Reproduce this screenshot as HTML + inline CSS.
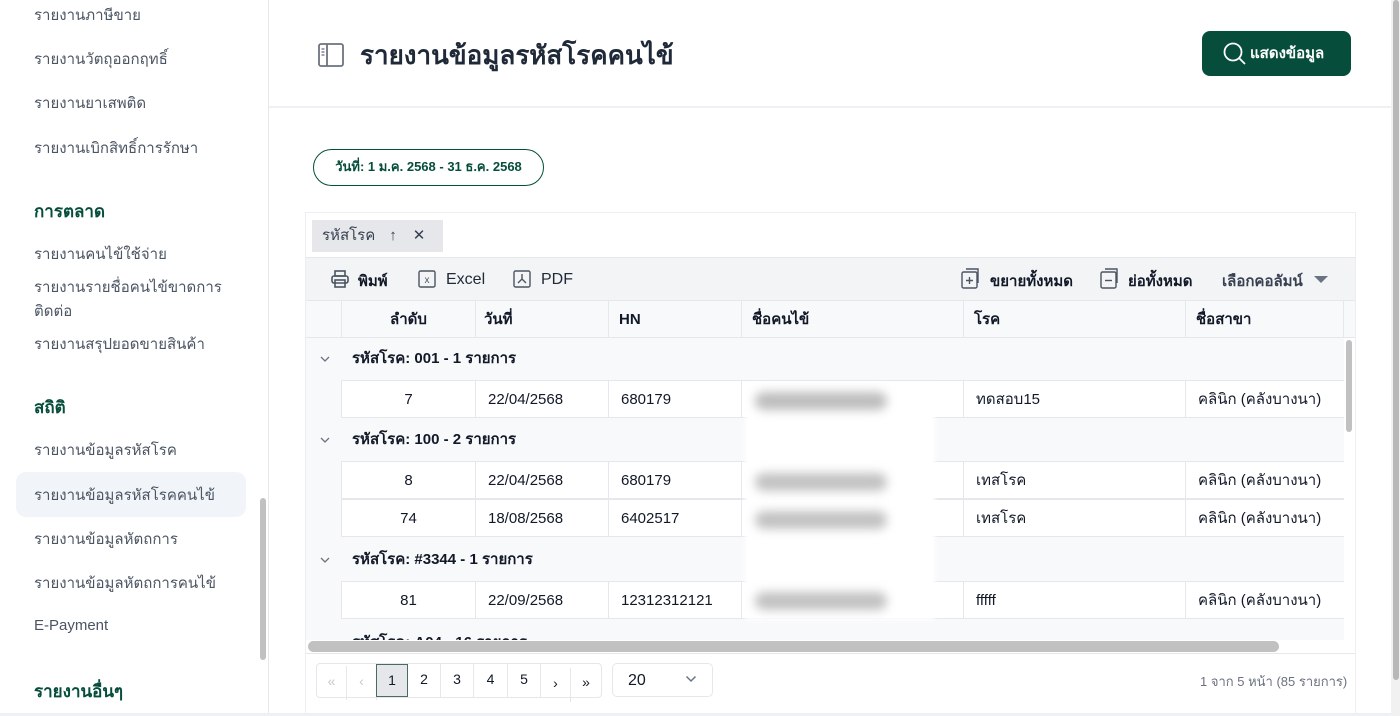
<!DOCTYPE html>
<html><head><meta charset="utf-8">
<style>
*{box-sizing:border-box;margin:0;padding:0}
body{width:1400px;height:716px;overflow:hidden;background:#fff;font-family:"Liberation Sans","Noto Sans CJK SC",sans-serif;color:#111827;position:relative}
.a{position:absolute}
.side{left:0;top:0;width:269px;height:716px;border-right:1px solid #e5e7eb;background:#fff}
.si{position:absolute;left:34px;font-size:15px;color:#4b5563;white-space:nowrap}
.sh{position:absolute;left:34px;font-size:17px;font-weight:bold;color:#064e3b}
.row{position:absolute;left:341px;width:1003px;height:38px;background:#fff;border-top:1px solid #e5e7eb;border-bottom:1px solid #e5e7eb}
.row div{position:absolute;top:0;height:37px;line-height:37px;font-size:15px;border-left:1px solid #e5e7eb;padding-left:12px}
.grp{position:absolute;left:306px;width:1038px;height:42px;background:#f8f9fb;font-weight:bold;font-size:15px;line-height:42px}
.grp svg{position:absolute;left:13px;top:17px}
.grp span.t{position:absolute;left:46px}
.pg{position:absolute;top:664px;height:34px;border-right:1px solid #e5e7eb;text-align:center;line-height:30px;font-size:14px}
</style></head><body>
<div class="a side">
<div class="si" style="top:3px">รายงานภาษีขาย</div>
<div class="si" style="top:47px">รายงานวัตถุออกฤทธิ์</div>
<div class="si" style="top:91px">รายงานยาเสพติด</div>
<div class="si" style="top:136px">รายงานเบิกสิทธิ์การรักษา</div>
<div class="sh" style="top:198px">การตลาด</div>
<div class="si" style="top:242px">รายงานคนไข้ใช้จ่าย</div>
<div class="si" style="top:275px">รายงานรายชื่อคนไข้ขาดการ</div>
<div class="si" style="top:299px">ติดต่อ</div>
<div class="si" style="top:332px">รายงานสรุปยอดขายสินค้า</div>
<div class="sh" style="top:394px">สถิติ</div>
<div class="si" style="top:438px">รายงานข้อมูลรหัสโรค</div>
<div class="a" style="left:16px;top:472px;width:230px;height:45px;background:#f1f4f8;border-radius:10px"></div>
<div class="si" style="top:483px">รายงานข้อมูลรหัสโรคคนไข้</div>
<div class="si" style="top:527px">รายงานข้อมูลหัตถการ</div>
<div class="si" style="top:571px">รายงานข้อมูลหัตถการคนไข้</div>
<div class="si" style="top:617px">E-Payment</div>
<div class="sh" style="top:678px">รายงานอื่นๆ</div>
<div class="a" style="left:260px;top:498px;width:6px;height:162px;background:#c1c1c1;border-radius:3px"></div>
</div>

<svg class="a" style="left:317px;top:42px" width="28" height="26" viewBox="0 0 28 26"><rect x="2" y="2" width="24" height="22" rx="2" fill="none" stroke="#6b7280" stroke-width="1.8"/><line x1="10" y1="2" x2="10" y2="24" stroke="#6b7280" stroke-width="1.8"/><line x1="4.5" y1="7" x2="7.5" y2="7" stroke="#6b7280" stroke-width="1.3"/><line x1="4.5" y1="10" x2="7.5" y2="10" stroke="#6b7280" stroke-width="1.3"/><line x1="4.5" y1="13" x2="7.5" y2="13" stroke="#6b7280" stroke-width="1.3"/></svg>
<div class="a" style="left:360px;top:35px;font-size:26px;font-weight:bold;color:#1f2937">รายงานข้อมูลรหัสโรคคนไข้</div>
<div class="a" style="left:1202px;top:31px;width:149px;height:45px;background:#064e3b;border-radius:8px;color:#fff;font-size:15px;font-weight:bold;line-height:45px;padding-left:48px">แสดงข้อมูล</div>
<svg class="a" style="left:1222px;top:41px" width="26" height="26" viewBox="0 0 26 26"><circle cx="11" cy="11" r="8.5" fill="none" stroke="#fff" stroke-width="1.8"/><line x1="17" y1="17" x2="23" y2="23" stroke="#fff" stroke-width="1.8"/></svg>
<div class="a" style="left:269px;top:106px;width:1123px;height:2px;background:#eef0f3"></div>
<div class="a" style="left:313px;top:149px;width:231px;height:37px;border:1.5px solid #064e3b;border-radius:19px;font-size:13px;font-weight:bold;color:#064e3b;text-align:center;line-height:34px">วันที่: 1 ม.ค. 2568 - 31 ธ.ค. 2568</div>

<div class="a" style="left:305px;top:212px;width:1051px;height:502px;border:1px solid #eceef1;background:#fff"></div>
<div class="a" style="left:312px;top:220px;width:131px;height:32px;background:#e5e7eb;font-size:15px;color:#374151;line-height:32px;padding-left:10px">รหัสโรค<span style="margin-left:14px">↑</span><span style="margin-left:16px">✕</span></div>
<div class="a" style="left:306px;top:257px;width:1049px;height:44px;background:#f3f4f6;border-top:1px solid #e5e7eb"></div>
<svg class="a" style="left:330px;top:269px" width="20" height="20" viewBox="0 0 20 20" fill="none" stroke="#4b5563" stroke-width="1.6"><rect x="5" y="2" width="10" height="5"/><rect x="2" y="7" width="16" height="7" rx="2"/><rect x="5" y="11" width="10" height="7"/></svg>
<div class="a" style="left:358px;top:269px;font-size:15px;font-weight:bold">พิมพ์</div>
<svg class="a" style="left:418px;top:270px" width="18" height="18" viewBox="0 0 18 18"><rect x="1" y="1" width="16" height="16" rx="1.5" fill="none" stroke="#4b5563" stroke-width="1.4"/><text x="9" y="13" font-size="10" text-anchor="middle" fill="#4b5563" font-family="Liberation Sans">x</text></svg>
<div class="a" style="left:446px;top:271px;font-size:16px;color:#1f2937">Excel</div>
<svg class="a" style="left:513px;top:270px" width="18" height="18" viewBox="0 0 18 18" fill="none" stroke="#4b5563" stroke-width="1.4"><rect x="1" y="1" width="16" height="16" rx="1.5"/><path d="M9 4v5l-4 4M9 9l4 4"/></svg>
<div class="a" style="left:541px;top:271px;font-size:16px;color:#1f2937">PDF</div>
<svg class="a" style="left:961px;top:268px" width="20" height="22" viewBox="0 0 20 22" fill="none" stroke="#4b5563" stroke-width="1.4"><rect x="1" y="4" width="15" height="16" rx="1.5"/><path d="M5 1h12v14"/><path d="M8.5 9v7M5 12.5h7"/></svg>
<div class="a" style="left:990px;top:269px;font-size:15px;font-weight:bold">ขยายทั้งหมด</div>
<svg class="a" style="left:1100px;top:268px" width="20" height="22" viewBox="0 0 20 22" fill="none" stroke="#4b5563" stroke-width="1.4"><rect x="1" y="4" width="15" height="16" rx="1.5"/><path d="M5 1h12v14"/><path d="M5 12.5h7"/></svg>
<div class="a" style="left:1128px;top:269px;font-size:15px;font-weight:bold">ย่อทั้งหมด</div>
<div class="a" style="left:1222px;top:269px;font-size:15px;font-weight:bold;color:#374151">เลือกคอลัมน์</div>
<div class="a" style="left:1314px;top:276px;width:0;height:0;border-left:7px solid transparent;border-right:7px solid transparent;border-top:7px solid #6b7280"></div>

<div class="a" style="left:306px;top:300px;width:1049px;height:38px;background:#f8f9fb;border-top:1px solid #e5e7eb;border-bottom:1px solid #e5e7eb;font-size:15px;font-weight:bold;line-height:37px">
<div class="a" style="left:35px;width:134px;height:37px;border-left:1px solid #e5e7eb;text-align:center">ลำดับ</div>
<div class="a" style="left:169px;width:133px;height:37px;border-left:1px solid #e5e7eb;padding-left:8px">วันที่</div>
<div class="a" style="left:302px;width:133px;height:37px;border-left:1px solid #e5e7eb;padding-left:10px">HN</div>
<div class="a" style="left:435px;width:222px;height:37px;border-left:1px solid #e5e7eb;padding-left:10px">ชื่อคนไข้</div>
<div class="a" style="left:657px;width:222px;height:37px;border-left:1px solid #e5e7eb;padding-left:10px">โรค</div>
<div class="a" style="left:879px;width:159px;height:37px;border-left:1px solid #e5e7eb;border-right:1px solid #e5e7eb;padding-left:10px">ชื่อสาขา</div>
</div>
<div class="a" style="left:306px;top:338px;width:1038px;height:302px;background:#f8f9fb"></div>

<div class="grp" style="top:338px"><svg width="12" height="8" viewBox="0 0 12 8"><path d="M2 2l4 4 4-4" fill="none" stroke="#6b7280" stroke-width="1.3"/></svg><span class="t">รหัสโรค: 001 - 1 รายการ</span></div>
<div class="row" style="top:380px"><div style="left:0;width:134px;text-align:center;padding:0">7</div><div style="left:134px">22/04/2568</div><div style="left:267px">680179</div><div style="left:400px"></div><div style="left:622px">ทดสอบ15</div><div style="left:844px">คลินิก (คลังบางนา)</div></div>
<div class="grp" style="top:419px"><svg width="12" height="8" viewBox="0 0 12 8"><path d="M2 2l4 4 4-4" fill="none" stroke="#6b7280" stroke-width="1.3"/></svg><span class="t">รหัสโรค: 100 - 2 รายการ</span></div>
<div class="row" style="top:461px"><div style="left:0;width:134px;text-align:center;padding:0">8</div><div style="left:134px">22/04/2568</div><div style="left:267px">680179</div><div style="left:400px"></div><div style="left:622px">เทสโรค</div><div style="left:844px">คลินิก (คลังบางนา)</div></div>
<div class="row" style="top:499px"><div style="left:0;width:134px;text-align:center;padding:0">74</div><div style="left:134px">18/08/2568</div><div style="left:267px">6402517</div><div style="left:400px"></div><div style="left:622px">เทสโรค</div><div style="left:844px">คลินิก (คลังบางนา)</div></div>
<div class="grp" style="top:539px"><svg width="12" height="8" viewBox="0 0 12 8"><path d="M2 2l4 4 4-4" fill="none" stroke="#6b7280" stroke-width="1.3"/></svg><span class="t">รหัสโรค: #3344 - 1 รายการ</span></div>
<div class="row" style="top:581px"><div style="left:0;width:134px;text-align:center;padding:0">81</div><div style="left:134px">22/09/2568</div><div style="left:267px">12312312121</div><div style="left:400px"></div><div style="left:622px">fffff</div><div style="left:844px">คลินิก (คลังบางนา)</div></div>
<div class="a" style="left:306px;top:620px;width:1038px;height:20px;overflow:hidden;background:#f8f9fb"><div style="position:absolute;left:46px;top:10px;font-size:15px;font-weight:bold">รหัสโรค: A04 - 16 รายการ</div></div>

<div class="a" style="left:745px;top:384px;width:190px;height:236px;background:#fff;filter:blur(2px)"></div>
<div class="a" style="left:755px;top:392px;width:132px;height:18px;background:#bdbdbd;border-radius:9px;filter:blur(5px)"></div>
<div class="a" style="left:755px;top:473px;width:132px;height:18px;background:#c2c2c2;border-radius:9px;filter:blur(5px)"></div>
<div class="a" style="left:755px;top:511px;width:132px;height:18px;background:#c2c2c2;border-radius:9px;filter:blur(5px)"></div>
<div class="a" style="left:755px;top:592px;width:132px;height:18px;background:#c2c2c2;border-radius:9px;filter:blur(5px)"></div>

<div class="a" style="left:1346px;top:340px;width:6px;height:92px;background:#c1c1c1;border-radius:3px"></div>
<div class="a" style="left:308px;top:641px;width:971px;height:11px;background:#c1c1c1;border-radius:6px"></div>
<div class="a" style="left:306px;top:653px;width:1049px;height:1px;background:#e5e7eb"></div>

<div class="a" style="left:316px;top:663px;width:286px;height:35px;border:1px solid #e5e7eb;border-radius:4px"></div>
<div class="pg" style="left:317px;width:30px;color:#c4c8ce;top:666px">«</div>
<div class="pg" style="left:347px;width:30px;color:#c4c8ce;top:666px">‹</div>
<div class="a" style="left:376px;top:664px;width:32px;height:33px;background:#e5e7eb;border:1.5px solid #4b6b5e;text-align:center;line-height:30px;font-size:14px">1</div>
<div class="pg" style="left:408px;width:33px">2</div>
<div class="pg" style="left:441px;width:33px">3</div>
<div class="pg" style="left:474px;width:34px">4</div>
<div class="pg" style="left:508px;width:33px">5</div>
<div class="pg" style="left:541px;width:30px;top:668px">›</div>
<div class="pg" style="left:571px;width:30px;border:none;top:667px">»</div>
<div class="a" style="left:612px;top:663px;width:101px;height:34px;border:1px solid #e5e7eb;border-radius:5px;font-size:16px;line-height:34px;padding-left:15px">20</div>
<svg class="a" style="left:685px;top:675px" width="12" height="8" viewBox="0 0 12 8"><path d="M1.5 1.5l4.5 4.5 4.5-4.5" fill="none" stroke="#6b7280" stroke-width="1.5"/></svg>
<div class="a" style="left:1200px;top:671px;font-size:13px;color:#6b7280">1 จาก 5 หน้า (85 รายการ)</div>

<div class="a" style="left:0;top:713px;width:1400px;height:3px;background:#eef0f3"></div>
<div class="a" style="left:1391px;top:0;width:9px;height:716px;background:#f1f1f1"></div>
<div class="a" style="left:1393px;top:0;width:6px;height:680px;background:#b8b8b8;border-radius:3px"></div>
</body></html>
